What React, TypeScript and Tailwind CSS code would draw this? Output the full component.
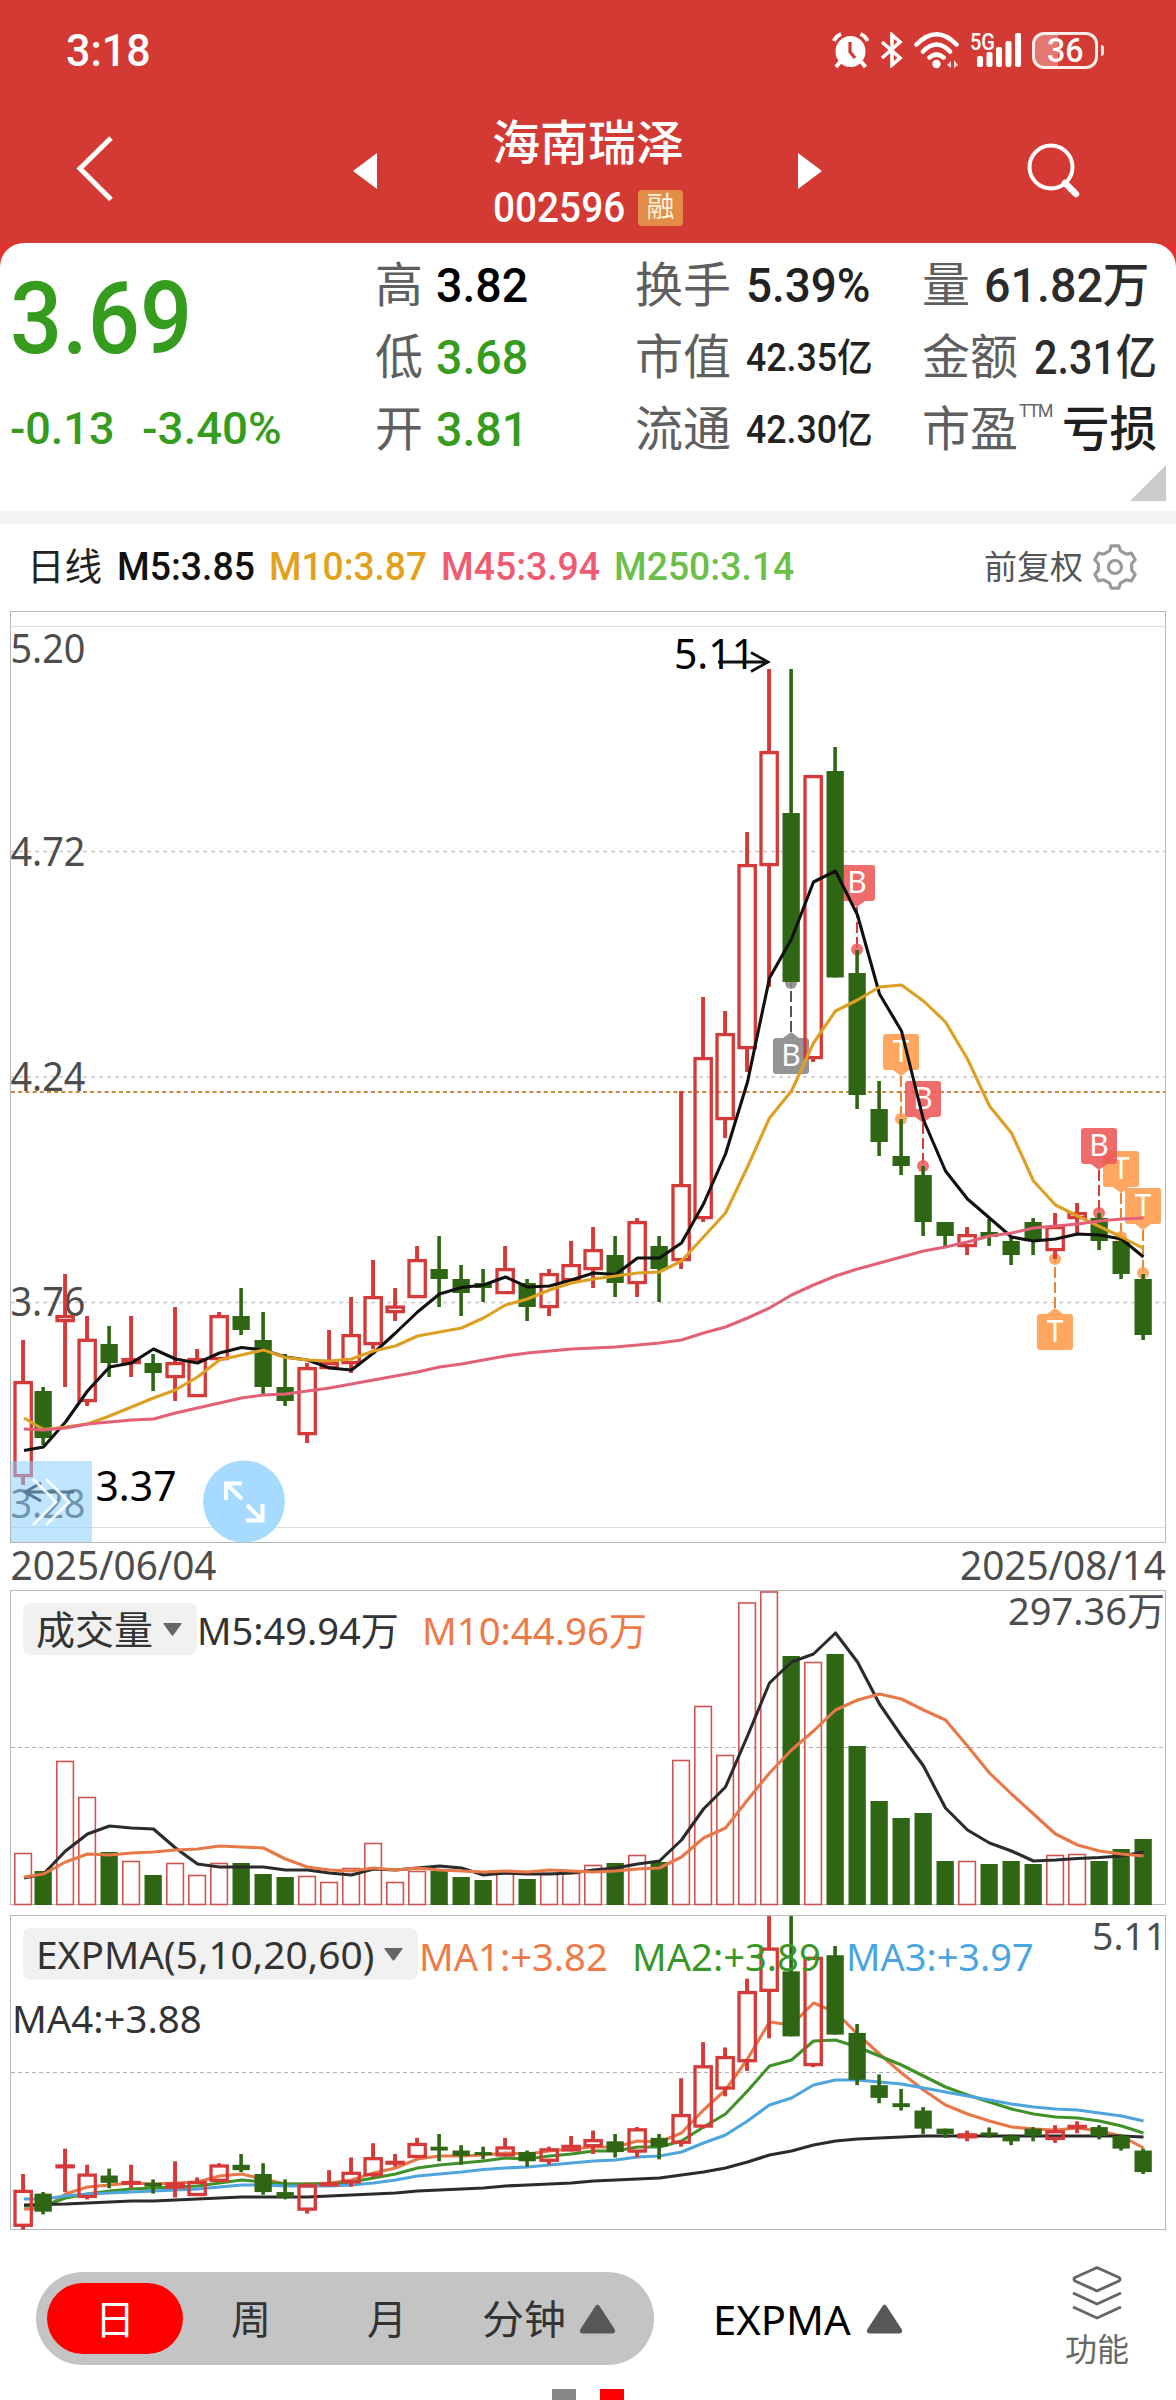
import { useLayoutEffect, useRef, useState, type ReactNode } from "react";

const NUM = "font-['Roboto','Noto_Sans_CJK_SC',sans-serif]";
const TXT = "font-['Noto_Sans','Noto_Sans_CJK_SC',sans-serif]";

/* A single line of text condensed or widened to a given advance width. */
function Fit({ w, className = "", children }: { w: number; className?: string; children: ReactNode }) {
  const ref = useRef<HTMLSpanElement>(null);
  const [k, setK] = useState(1);
  useLayoutEffect(() => {
    if (ref.current) setK(w / ref.current.offsetWidth);
  }, [w]);
  return (
    <span className={`block shrink-0 leading-none ${className}`} style={{ width: w }}>
      <span ref={ref} className="inline-block origin-left whitespace-nowrap" style={{ transform: `scaleX(${k})` }}>
        {children}
      </span>
    </span>
  );
}

const RED = "#d53a39";
const GREEN = "#2f6614";

type Candle = [up: 0 | 1, high: number, top: number, bottom: number, low: number];
const candles: Candle[] = [
  [1, 1340, 1381, 1477, 1485], [0, 1387, 1391, 1438, 1445], [1, 1274, 1315, 1322, 1387], [1, 1316, 1338.7, 1402, 1406],
  [0, 1326, 1344, 1363, 1377], [1, 1316, 1358, 1364, 1377], [0, 1354, 1363, 1373, 1391], [1, 1307, 1362, 1378, 1401],
  [1, 1349, 1358, 1397, 1397], [1, 1312, 1315, 1360, 1360], [0, 1288, 1316, 1330, 1335], [0, 1312, 1340, 1387, 1394],
  [0, 1354, 1387, 1401, 1406], [1, 1363, 1367, 1435, 1443], [1, 1330, 1362, 1369, 1369], [1, 1297, 1334, 1364, 1373],
  [1, 1260, 1296, 1345, 1349], [1, 1288, 1305.5, 1313, 1321], [1, 1246, 1259, 1298, 1298], [0, 1236, 1269, 1279, 1307],
  [0, 1265, 1279, 1293, 1316], [0, 1269, 1283, 1288, 1302], [1, 1246, 1268, 1294, 1294], [0, 1279, 1283, 1307, 1321],
  [1, 1269, 1273, 1308, 1316], [1, 1241, 1264, 1281, 1281], [1, 1227, 1249, 1270, 1288], [0, 1236, 1255, 1283, 1297],
  [1, 1218, 1221, 1284, 1297], [0, 1236, 1246, 1269, 1302], [1, 1091, 1184, 1261, 1269], [1, 997, 1057, 1219, 1222],
  [1, 1011, 1033, 1120, 1138], [1, 832, 864, 1049, 1072], [1, 669, 751, 866, 987], [0, 669, 813, 982, 982],
  [1, 775, 775, 1059, 1062], [0, 747, 771, 977.5, 977.5], [0, 950, 973, 1095, 1109], [0, 1081, 1109, 1142, 1156],
  [0, 1119, 1156, 1166, 1175], [0, 1166, 1175, 1222, 1236], [0, 1222, 1222, 1236, 1246], [1, 1227, 1234, 1247, 1255],
  [0, 1219, 1232, 1237, 1246], [0, 1237, 1241, 1255, 1265], [0, 1218, 1222, 1241, 1255], [1, 1213, 1226, 1251, 1259],
  [1, 1203, 1212, 1219, 1234], [0, 1213, 1218, 1241, 1250], [0, 1237, 1241, 1274, 1279], [0, 1274, 1279, 1335, 1340],
];

const ma5 = [1450.5, 1447, 1422, 1391, 1367, 1363, 1349, 1359, 1363, 1353, 1347.5, 1350, 1357, 1360, 1368, 1370, 1353, 1333, 1312, 1294, 1287.5, 1285, 1277, 1287, 1286, 1280, 1273, 1274.5, 1258, 1258, 1243, 1204, 1154, 1082, 978, 939, 882, 871, 915, 994, 1031, 1120, 1171, 1199, 1218, 1237, 1241, 1239, 1234, 1235, 1239, 1257];
const ma10 = [1418, 1429.5, 1427, 1424, 1416, 1407, 1398, 1390, 1377, 1360, 1355, 1350, 1357.5, 1360, 1361, 1359, 1351, 1346, 1336, 1332, 1328, 1318, 1305, 1299, 1290, 1283, 1279, 1276, 1273, 1272, 1261, 1237, 1213, 1167, 1118, 1091, 1043, 1011, 1000, 987, 985, 1001, 1022, 1059, 1106, 1133, 1181, 1205, 1216, 1226.5, 1237, 1248.5];
const ma45 = [1429, 1430, 1428, 1424, 1422, 1420, 1419, 1413, 1408, 1403, 1398, 1395, 1394, 1391, 1388, 1384, 1380, 1376, 1372, 1367, 1364, 1360, 1356, 1353, 1351, 1349, 1348, 1347, 1345, 1343, 1340, 1333, 1327, 1318, 1308, 1295, 1285, 1276, 1269, 1263, 1257, 1251, 1247, 1242, 1236, 1233, 1228, 1226, 1224, 1221, 1219, 1218];

const volumes = [1853, 1871, 1761, 1797, 1852, 1861, 1875, 1863, 1875, 1863, 1863, 1874, 1877, 1876, 1882, 1868, 1843, 1882, 1871, 1871, 1877, 1880, 1873, 1879, 1873, 1873, 1865, 1863, 1855, 1862, 1760, 1706, 1755, 1602.5, 1591.5, 1656, 1662, 1654, 1746, 1801, 1818, 1813, 1861, 1861, 1864, 1861, 1864, 1855, 1854, 1861, 1849, 1839];
const vol5 = [1878, 1874, 1851, 1834, 1826, 1828, 1829, 1848, 1864, 1867, 1867, 1867, 1870, 1870, 1873, 1875, 1869, 1870, 1868, 1866, 1868, 1875, 1873, 1874, 1874, 1873, 1870, 1868, 1864, 1861, 1840, 1809, 1787, 1736, 1683, 1662, 1654, 1633, 1662, 1704, 1736, 1766, 1808, 1830, 1843, 1851, 1861, 1860, 1858.5, 1857.5, 1856, 1852];
const vol10 = [1877, 1874, 1862, 1854, 1855, 1853, 1852, 1850, 1849, 1846, 1847, 1848, 1859, 1867, 1870, 1871, 1868, 1870, 1868, 1870, 1871, 1872, 1871, 1872, 1870, 1871, 1872, 1871, 1869, 1868, 1857, 1838, 1828, 1800, 1773, 1750, 1731, 1710, 1700, 1694, 1699, 1710, 1720, 1746, 1773, 1794, 1814, 1834, 1845, 1851, 1854, 1856];

const exp1 = [2209, 2209, 2194, 2187, 2185, 2183, 2184, 2183, 2182, 2176, 2174, 2179, 2184, 2184, 2183, 2180, 2173, 2168, 2159, 2156, 2156, 2155, 2153, 2154, 2151, 2149, 2147, 2147, 2141, 2142, 2133, 2110, 2090, 2059, 2022, 2025, 2003, 2012, 2034, 2054, 2073, 2090, 2105, 2114, 2121, 2127, 2129, 2130, 2128, 2131, 2136, 2148];
const exp2 = [2206, 2206, 2198, 2194, 2191, 2189, 2188, 2187, 2186, 2183, 2180, 2182, 2184, 2184, 2184, 2182, 2178, 2174, 2168, 2165, 2163, 2161, 2158, 2159, 2156, 2154, 2151, 2151, 2147, 2147, 2141, 2127, 2114, 2091, 2066, 2060, 2041, 2040, 2047, 2056, 2065, 2076, 2087, 2095, 2102, 2109, 2114, 2117, 2118, 2121, 2126, 2133];
const exp3 = [2199, 2199, 2196, 2194, 2193, 2192, 2191, 2190, 2189, 2187, 2185, 2185, 2186, 2186, 2186, 2185, 2183, 2180, 2176, 2174, 2172, 2169.5, 2168, 2167, 2165, 2163, 2161, 2160, 2157, 2156, 2152, 2143, 2135, 2121, 2105, 2098, 2085, 2080, 2080, 2082, 2084, 2088, 2092, 2096, 2100, 2104, 2107, 2109, 2110, 2113, 2116, 2121];
const exp4 = [2205, 2204.5, 2204, 2203, 2202, 2201, 2201, 2200, 2199, 2198, 2197, 2197, 2197, 2197, 2196, 2195, 2194, 2193, 2191, 2190, 2189, 2188, 2186, 2185, 2184, 2183, 2181, 2180, 2179, 2178, 2175, 2172, 2168, 2162, 2155, 2151, 2145, 2141, 2139, 2138, 2137, 2136, 2136, 2136, 2136, 2136, 2136, 2136, 2136, 2136, 2136, 2137];

const cx = (i: number) => (i === 0 ? 23 : 21 + 22 * i);
const path = (ys: number[]) => ys.map((y, i) => `${i ? cx(i) + 0.5 : 24},${y}`).join(" ");

function Line({ ys, color }: { ys: number[]; color: string }) {
  return <polyline points={path(ys)} fill="none" stroke={color} strokeWidth="3.1" strokeLinejoin="round" />;
}

function Candles({ map = (y: number) => y }: { map?: (y: number) => number }) {
  return (
    <g>
      {candles.map(([up, h, t, b, l], i) => {
        const x = cx(i);
        const [hy, ty, by, ly] = [map(h), map(t), map(b), map(l)];
        if (!up)
          return (
            <g key={i} fill={GREEN}>
              <rect x={x - 1.7} y={hy} width="3.6" height={ly - hy} />
              <rect x={x - 8.5} y={ty} width="17.3" height={Math.max(by - ty, 3)} />
            </g>
          );
        return (
          <g key={i} fill={RED}>
            <rect x={x - 1.9} y={hy} width="3.9" height={Math.max(ty - hy, 0) + 1} />
            <rect x={x - 1.9} y={by - 1} width="3.9" height={Math.max(ly - by, 0) + 1} />
            <rect x={x - 8} y={ty + 1.6} width="16.3" height={Math.max(by - ty - 3, 0.8)} fill="none" stroke={RED} strokeWidth="3.3" />
          </g>
        );
      })}
    </g>
  );
}

type Mark = { x: number; y: number; dot: number; t: "B" | "T"; fill: string; line: string };
const marks: Mark[] = [
  { x: 791, y: 1038, dot: 983, t: "B", fill: "#868686", line: "#555555" },
  { x: 857, y: 865, dot: 949.5, t: "B", fill: "#ec5858", line: "#d83a38" },
  { x: 901, y: 1034, dot: 1119, t: "T", fill: "#ff9a4b", line: "#ee8430" },
  { x: 923, y: 1081, dot: 1166, t: "B", fill: "#ec5858", line: "#d83a38" },
  { x: 1055, y: 1314, dot: 1259, t: "T", fill: "#ff9a4b", line: "#ee8430" },
  { x: 1121, y: 1151, dot: 1237, t: "T", fill: "#ff9a4b", line: "#ee8430" },
  { x: 1099, y: 1128, dot: 1213, t: "B", fill: "#ec5858", line: "#d83a38" },
  { x: 1143, y: 1188, dot: 1273, t: "T", fill: "#ff9a4b", line: "#ee8430" },
];

function Marker({ x, y, dot, t, fill, line }: Mark) {
  const below = y > dot;
  const tip = below ? y - 6 : y + 42;
  const base = below ? y : y + 36;
  return (
    <g>
      <line x1={x} x2={x} y1={tip} y2={dot} stroke={line} strokeWidth="2" strokeDasharray="11 4" />
      <circle cx={x} cy={dot} r="6" fill={fill} opacity="0.85" />
      <g opacity="0.88" fill={fill}>
        <rect x={x - 18} y={y} width="36" height="36" rx="3" />
        <path d={`M${x - 8} ${base}H${x + 8}L${x} ${tip}Z`} />
      </g>
      <text x={x} y={y + 28} fontSize="30" fill="#fff" textAnchor="middle" className={TXT}>{t}</text>
    </g>
  );
}

function Label({ x, y, w, s = 40, c = "#4d4d4d", children }: { x: number; y: number; w: number; s?: number; c?: string; children: string }) {
  return (
    <text x={x} y={y} fontSize={s} fill={c} textLength={w} lengthAdjust="spacingAndGlyphs" className={TXT}>{children}</text>
  );
}

function StatusBar() {
  return (
    <div className="flex h-[100px] items-center pl-[66px]">
      <Fit w={85} className={`${NUM} text-[45px] font-medium text-white`}>3:18</Fit>
      <div className="ml-[681px] flex items-center">
        <svg width="38" height="38" viewBox="0 0 38 38" fill="none" stroke="#fff">
          <ellipse cx="18.500" cy="20.500" rx="15" ry="15.500" fill="#fff" stroke="none" />
          <path d="M2 10Q4 5 9 3M35.500 10Q33.500 5 28.500 3" strokeWidth="4" />
          <path d="M8 31l-4 5M29.500 31l4 5" strokeWidth="4" />
          <path d="M18 11v10l5 6" stroke="#d33a33" strokeWidth="3.2" />
        </svg>
        <svg className="ml-[10px]" width="24" height="36" viewBox="0 0 24 36" fill="none" stroke="#fff" strokeWidth="3.6">
          <path d="M2 10l18 16-8 7V3l8 7L2 26" />
        </svg>
        <svg className="ml-[10px]" width="46" height="38" viewBox="0 0 46 38" fill="none" stroke="#fff" strokeWidth="4.6" strokeLinecap="round">
          <path d="M2.500 13.500Q22.500-7 42.500 13.500M9 20.500Q22.500 6.500 36 20.500M15.500 26.500Q22.500 20.500 29.500 26.500" />
          <circle cx="22.500" cy="33" r="4.200" fill="#fff" stroke="none" />
          <path d="M37 30v7l-4-3zM40 37v-8l4 5z" fill="#fff" stroke="none" opacity="0.8" />
        </svg>
        <svg className="ml-[10px] overflow-visible" width="54" height="36" viewBox="0 0 54 36">
          <text x="0" y="17.500" fontSize="23" fontWeight="500" fill="#fff" textLength="25" lengthAdjust="spacingAndGlyphs" className={NUM}>5G</text>
          <g fill="#fff">
            <rect x="7" y="24" width="6" height="11" rx="2" />
            <rect x="16.500" y="20" width="6" height="15" rx="2" />
            <rect x="26" y="15" width="6" height="20" rx="2" />
            <rect x="35.500" y="9" width="6" height="26" rx="2" />
            <rect x="45" y="1" width="6" height="34" rx="2" />
          </g>
        </svg>
        <div className="ml-[8px] flex h-[37px] w-[66px] items-center justify-center rounded-[12px] border-[3px] border-white/90 bg-[linear-gradient(90deg,#e37772_38%,transparent_38%)]">
          <Fit w={37} className={`${NUM} text-[34px] font-medium text-white`}>36</Fit>
        </div>
        <div className="ml-[3px] h-[11px] w-[3px] rounded-r bg-white/90" />
      </div>
    </div>
  );
}

function TitleBar() {
  return (
    <div className="flex h-[143px] items-start">
      <svg className="ml-[72px] mt-[34px]" width="46" height="70" viewBox="0 0 46 70" fill="none" stroke="#fff" strokeWidth="5">
        <path d="M39 4L8 34.500L39 65.500" />
      </svg>
      <svg className="ml-[235px] mt-[53px]" width="25" height="36" viewBox="0 0 25 36" fill="#fff"><path d="M24 0v36L0 18z" /></svg>
      <div className="ml-[114px] w-[192px]">
        <div className="mt-[16px] h-[51px] font-['Noto_Sans_CJK_SC',sans-serif] text-[48px] leading-[46px] font-medium whitespace-nowrap text-white">海南瑞泽</div>
        <div className="mt-[22px] flex h-[38px] items-center">
          <Fit w={132} className={`${NUM} ml-px text-[42px] font-medium text-white`}>002596</Fit>
          <span className={`ml-[13px] flex h-[36px] w-[45px] items-center justify-center rounded-[4px] bg-[#e38d48] text-[28px] leading-none text-[#fff3dc] ${NUM}`}>融</span>
        </div>
      </div>
      <svg className="ml-[114px] mt-[53px]" width="25" height="36" viewBox="0 0 25 36" fill="#fff"><path d="M0 0v36L24 18z" /></svg>
      <svg className="ml-[200px] mt-[40px]" width="60" height="62" viewBox="0 0 60 62" fill="none" stroke="#fff">
        <circle cx="28" cy="27" r="21.500" strokeWidth="4" />
        <path d="M42 43L53 54" strokeWidth="6.500" strokeLinecap="round" />
      </svg>
    </div>
  );
}

function Cell({ label, tm, gap = "ml-[16px]", children }: { label: string; tm?: boolean; gap?: string; children: ReactNode }) {
  return (
    <div className="flex h-[72px] items-center">
      <span className={`${NUM} mt-px text-[48px] leading-none whitespace-nowrap text-[#5f5f5f]`}>{label}</span>
      {tm && <span className={`mb-[36px] ml-px w-[30px] text-[18px] leading-none tracking-[-1.500px] text-[#666] ${NUM}`}>TTM</span>}
      <span className={gap}>{children}</span>
    </div>
  );
}

function Quote() {
  const v = `${NUM} mt-px text-[48px] font-medium`;
  const s = `${NUM} mt-[3px] text-[39px] font-medium text-[#222]`;
  return (
    <section className="relative flex h-[268px] rounded-t-[24px] bg-white pt-[6px]">
      <div className="w-[375px] pl-[10px]">
        <Fit w={182} className={`${NUM} mt-[20px] text-[100px] font-medium text-[#359c1e]`}>3.69</Fit>
        <div className="mt-[37px] flex h-[45px]">
          <Fit w={105} className={`${NUM} text-[45px] font-medium text-[#359c1e]`}>-0.13</Fit>
          <Fit w={140} className={`${NUM} ml-[27px] text-[45px] font-medium text-[#359c1e]`}>-3.40%</Fit>
        </div>
      </div>
      <div className="w-[260px]">
        <Cell label="高" gap="ml-[13px]"><Fit w={92} className={`${v} text-black`}>3.82</Fit></Cell>
        <Cell label="低" gap="ml-[13px]"><Fit w={92} className={`${v} text-[#359c1e]`}>3.68</Fit></Cell>
        <Cell label="开" gap="ml-[13px]"><Fit w={92} className={`${v} text-[#359c1e]`}>3.81</Fit></Cell>
      </div>
      <div className="w-[287px]">
        <Cell label="换手" gap="ml-[15px]"><Fit w={125} className={`${v} text-[#222]`}>5.39%</Fit></Cell>
        <Cell label="市值" gap="ml-[15px]"><Fit w={127} className={s}>42.35亿</Fit></Cell>
        <Cell label="流通" gap="ml-[15px]"><Fit w={127} className={s}>42.30亿</Fit></Cell>
      </div>
      <div>
        <Cell label="量" gap="ml-[14px]"><Fit w={165} className={`${v} text-[#2c2c2c]`}>61.82万</Fit></Cell>
        <Cell label="金额"><Fit w={123} className={`${v} text-[#2c2c2c]`}>2.31亿</Fit></Cell>
        <Cell label="市盈" tm gap="ml-[13px]"><Fit w={95} className={`${v} text-[#1f1f1f]`}>亏损</Fit></Cell>
      </div>
      <svg className="absolute right-[10px] bottom-[10px]" width="36" height="36" viewBox="0 0 36 36" fill="#ccc"><path d="M36 0v36H0z" /></svg>
    </section>
  );
}

function gearPath() {
  const pts: string[] = [];
  for (let i = 0; i < 6; i++) {
    const a = (i * Math.PI) / 3 - Math.PI / 2;
    for (const [d, r] of [[-0.33, 17], [-0.18, 21.5], [0.18, 21.5], [0.33, 17]]) {
      pts.push(`${(23 + Math.cos(a + d) * r).toFixed(1)} ${(23 + Math.sin(a + d) * r).toFixed(1)}`);
    }
  }
  return `M${pts.join("L")}Z`;
}

function LegendRow() {
  const c = `${NUM} text-[39px] font-medium`;
  return (
    <div className="flex h-[86px] items-center pl-[27px]">
      <Fit w={75} className={`${NUM} text-[38px] text-[#222]`}>日线</Fit>
      <Fit w={138} className={`${c} ml-[15px] text-[#111]`}>M5:3.85</Fit>
      <Fit w={158} className={`${c} ml-[14px] text-[#e3a01b]`}>M10:3.87</Fit>
      <Fit w={159} className={`${c} ml-[14px] text-[#ee5b72]`}>M45:3.94</Fit>
      <Fit w={180} className={`${c} ml-[14px] text-[#6cbf4b]`}>M250:3.14</Fit>
      <Fit w={99} className={`${NUM} ml-[190px] text-[33px] text-[#555]`}>前复权</Fit>
      <svg className="ml-[9px]" width="46" height="46" viewBox="0 0 46 46" fill="none" stroke="#999" strokeWidth="3.2" strokeLinejoin="round">
        <path d={gearPath()} />
        <circle cx="23" cy="23" r="6.500" />
      </svg>
    </div>
  );
}

function PriceChart() {
  return (
    <svg className="block overflow-visible" width="1176" height="978" viewBox="0 610 1176 978">
      <g fill="none">
        <path d="M11 626.500H1165M11 1527.500H1165" stroke="#dedede" />
        <path d="M11 851.500H1165M11 1077H1165M11 1302.500H1165" stroke="#c9c9c9" strokeWidth="1.300" strokeDasharray="4 4" />
        <rect x="10.500" y="611.500" width="1155" height="931" stroke="#b8b8b8" />
        <path d="M11 1092H1165" stroke="#c9853a" strokeWidth="1.800" strokeDasharray="4 3.200" />
      </g>
      <Label x={10.5} y={663} w={75}>5.20</Label>
      <Label x={10.5} y={866} w={75}>4.72</Label>
      <Label x={10.5} y={1091} w={75}>4.24</Label>
      <Label x={10.5} y={1316} w={75}>3.76</Label>
      <Label x={10.5} y={1518} w={75}>3.28</Label>
      {marks.map((m) => <Marker key={m.x} {...m} />)}
      <Candles />
      <Line ys={ma5} color="#111" />
      <Line ys={ma10} color="#dda022" />
      <Line ys={ma45} color="#e26176" />
      <Label x={674} y={669} w={81} s={42} c="#000">5.11</Label>
      <Label x={95.5} y={1501} w={81} s={42} c="#000">3.37</Label>
      <g fill="none" stroke="#111" strokeWidth="2.800">
        <path d="M718 662H768M751 652.500L768 662L751 671.500" />
        <path d="M74 1492H25M41 1483L25 1492L41 1501" />
      </g>
      <rect x="11" y="1461" width="81" height="81" fill="#8dcffd" opacity="0.55" />
      <path d="M33 1479L56 1502L33 1525M46 1479L69 1502L46 1525" fill="none" stroke="#fff" strokeOpacity="0.9" strokeWidth="2.800" />
      <circle cx="244" cy="1501.500" r="41" fill="#a6daff" />
      <path d="M242 1499L226 1483.500M226 1500V1483.500H242M247 1505L262.500 1520.500M262.500 1504V1520.500H246" fill="none" stroke="#fff" strokeWidth="4" />
      <Label x={10.5} y={1579.5} w={206}>2025/06/04</Label>
      <Label x={960} y={1579.5} w={206}>2025/08/14</Label>
    </svg>
  );
}

function Picker({ w, children }: { w: number; children: string }) {
  return (
    <div className="flex h-[52px] shrink-0 items-center rounded-[8px] bg-[#f1f1f1] pr-[15px] pl-[13px]">
      <Fit w={w} className={`${TXT} -mt-px text-[39px] text-[#333]`}>{children}</Fit>
      <svg className="ml-[10px]" width="19" height="13" viewBox="0 0 19 13" fill="#666"><path d="M1 0H18Q19 0 18.500 1L10.500 12Q9.500 13 8.500 12L.5 1Q0 0 1 0" /></svg>
    </div>
  );
}

function VolumeChart() {
  return (
    <section className="relative h-[326px]">
      <svg className="block" width="1176" height="326" viewBox="0 1588 1176 326">
        <rect x="10.500" y="1590.500" width="1155" height="314" fill="none" stroke="#b8b8b8" />
        <path d="M11 1747.500H1165" stroke="#b4b4b4" strokeDasharray="4 3" />
        {volumes.map((y, i) =>
          candles[i][0] ? (
            <rect key={i} x={cx(i) - 8.2} y={y + 0.5} width="16.600" height={1904 - y} fill="none" stroke="#cf5553" strokeWidth="1.600" />
          ) : (
            <rect key={i} x={cx(i) - 8.5} y={y} width="17.300" height={1905 - y} fill={GREEN} />
          ),
        )}
        <Line ys={vol5} color="#2b2b2b" />
        <Line ys={vol10} color="#e87848" />
      </svg>
      <div className="absolute inset-x-0 top-[15px] flex h-[52px] items-center pl-[23px]">
        <Picker w={117}>成交量</Picker>
        <Fit w={202} className={`${TXT} mt-px text-[39px] text-[#333]`}>M5:49.94万</Fit>
        <Fit w={225} className={`${TXT} mt-px ml-[23px] text-[39px] text-[#ee7a48]`}>M10:44.96万</Fit>
      </div>
      <Fit w={157} className={`${TXT} absolute top-[2px] right-[11px] text-[39px] text-[#4d4d4d]`}>297.36万</Fit>
    </section>
  );
}

function ExpmaChart() {
  return (
    <section className="relative h-[326px]">
      <svg className="block" width="1176" height="326" viewBox="0 1914 1176 326">
        <rect x="10.500" y="1915.500" width="1155" height="314" fill="none" stroke="#b8b8b8" />
        <path d="M11 2072.500H1165" stroke="#b4b4b4" strokeDasharray="4 3" />
        <Line ys={exp1} color="#e87848" />
        <Line ys={exp2} color="#3f9128" />
        <Line ys={exp3} color="#4ea5de" />
        <Line ys={exp4} color="#2b2b2b" />
        <Candles map={(y) => 1916 + (y - 669) * 0.3845} />
      </svg>
      <div className="absolute inset-x-0 top-[14px] flex h-[52px] items-center pl-[23px]">
        <Picker w={338}>EXPMA(5,10,20,60)</Picker>
        <Fit w={189} className={`${TXT} mt-[2px] ml-px text-[39px] text-[#ee7a48]`}>MA1:+3.82</Fit>
        <Fit w={189} className={`${TXT} mt-[2px] ml-[24px] text-[39px] text-[#3a9626]`}>MA2:+3.89</Fit>
        <Fit w={188} className={`${TXT} mt-[2px] ml-[25px] text-[39px] text-[#4aa5e0]`}>MA3:+3.97</Fit>
      </div>
      <Fit w={190} className={`${TXT} absolute top-[84px] left-[12px] text-[39px] text-[#333]`}>MA4:+3.88</Fit>
      <Fit w={74} className={`${TXT} absolute top-[1px] right-[10px] text-[39px] text-[#4d4d4d]`}>5.11</Fit>
    </section>
  );
}

function UpTriangle() {
  return (
    <svg width="37" height="30" viewBox="0 0 37 30" fill="#575757"><path d="M16.500 2Q18.500-1 20.500 2L35.500 25Q37.500 29.500 33 29.500H4Q-.5 29.500 1.500 25Z" /></svg>
  );
}

function BottomBar() {
  const t = `${TXT} text-[40px] leading-none text-[#333]`;
  return (
    <footer className="h-[160px]">
      <div className="flex h-[149px] items-start pl-[36px]">
        <div className="mt-[32px] flex h-[93px] w-[618px] items-center rounded-full bg-[#c4c4c4] pl-[11px]">
          <div className="flex h-[71px] w-[136px] items-center justify-center rounded-full bg-[#ff0000]">
            <span className={`${TXT} text-[40px] leading-none text-white`}>日</span>
          </div>
          <span className={`${t} ml-[48px]`}>周</span>
          <span className={`${t} ml-[96px]`}>月</span>
          <Fit w={84} className={`${t} ml-[75px]`}>分钟</Fit>
          <span className="ml-[13px]"><UpTriangle /></span>
        </div>
        <div className="ml-[59px] mt-[32px] flex h-[93px] items-center">
          <Fit w={138} className={`${TXT} mt-[2px] text-[40px] text-black`}>EXPMA</Fit>
          <span className="ml-[15px]"><UpTriangle /></span>
        </div>
        <div className="mt-[25px] ml-[161px] flex w-[66px] flex-col items-center">
          <svg width="52" height="56" viewBox="0 0 52 56" fill="none" stroke="#666" strokeWidth="3" strokeLinejoin="round">
            <path d="M24 3.500Q26 2 28 3.500L48 12.500Q50 14 48 16L28 25Q26 26.500 24 25L4 16Q2 14 4 12.500Z" />
            <path d="M2 28L26 39L50 28M2 42L26 53L50 42" />
          </svg>
          <span className={`${NUM} mt-[13px] text-[32px] leading-none text-[#666]`}>功能</span>
        </div>
      </div>
      <div className="flex h-[11px] gap-[24px] pl-[552px]">
        <div className="w-[24px] bg-[#888]" />
        <div className="w-[24px] bg-[#ff0000]" />
      </div>
    </footer>
  );
}

export default function App() {
  return (
    <div className="h-[2400px] w-[1176px] overflow-hidden bg-white">
      <header className="bg-[#d33a33]">
        <StatusBar />
        <TitleBar />
      </header>
      <div className="bg-[#e2332f]"><Quote /></div>
      <div className="h-[13px] bg-[#f4f4f4]" />
      <LegendRow />
      <PriceChart />
      <VolumeChart />
      <ExpmaChart />
      <BottomBar />
    </div>
  );
}
